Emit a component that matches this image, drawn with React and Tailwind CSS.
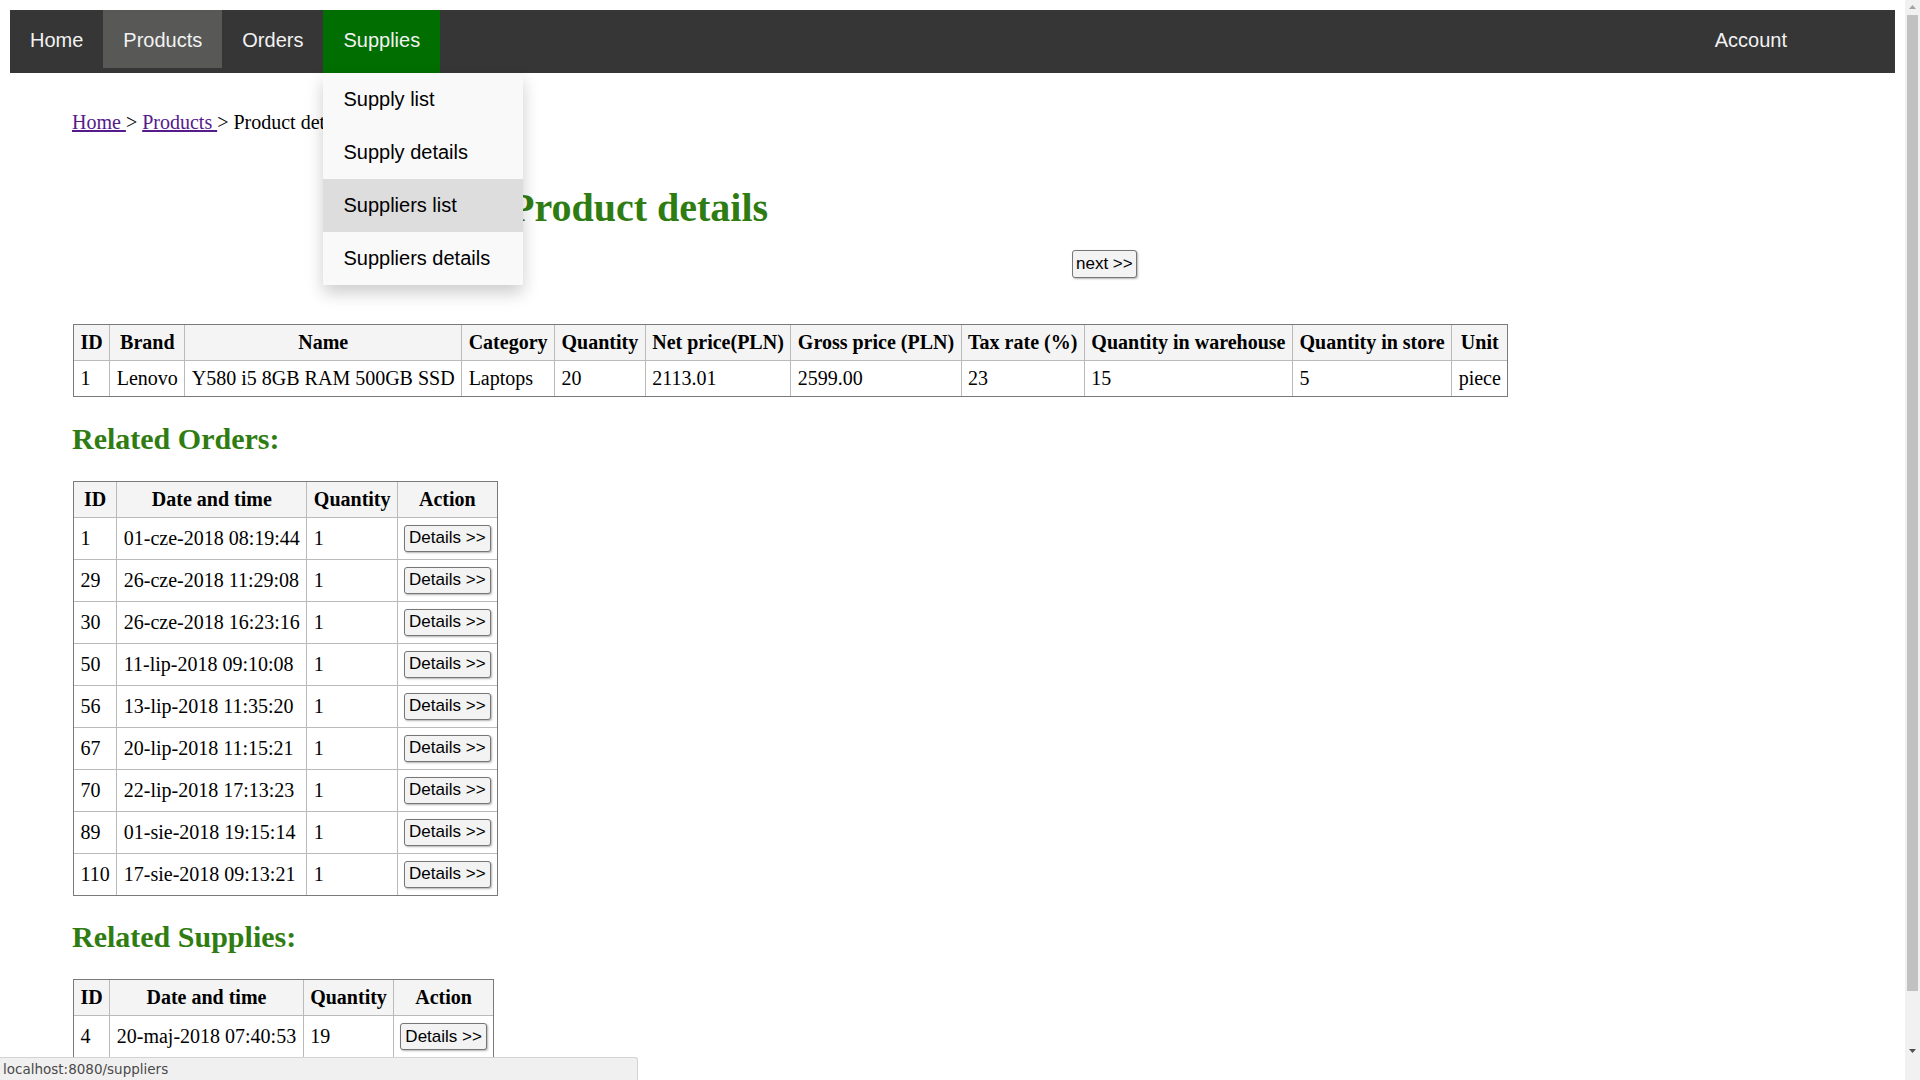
import React from 'react';

const sans = "font-['Liberation_Sans',Arial,sans-serif]";

const product = {
  cols: ['ID', 'Brand', 'Name', 'Category', 'Quantity', 'Net price(PLN)', 'Gross price (PLN)', 'Tax rate (%)', 'Quantity in warehouse', 'Quantity in store', 'Unit'],
  rows: [['1', 'Lenovo', 'Y580 i5 8GB RAM 500GB SSD', 'Laptops', '20', '2113.01', '2599.00', '23', '15', '5', 'piece']],
};

const orders = [
  ['1', '01-cze-2018 08:19:44', '1'],
  ['29', '26-cze-2018 11:29:08', '1'],
  ['30', '26-cze-2018 16:23:16', '1'],
  ['50', '11-lip-2018 09:10:08', '1'],
  ['56', '13-lip-2018 11:35:20', '1'],
  ['67', '20-lip-2018 11:15:21', '1'],
  ['70', '22-lip-2018 17:13:23', '1'],
  ['89', '01-sie-2018 19:15:14', '1'],
  ['110', '17-sie-2018 09:13:21', '1'],
];

const supplies = [
  ['4', '20-maj-2018 07:40:53', '19'],
  ['7', '02-cze-2018 10:12:31', '5'],
];

const Btn = ({ children, className = '' }) => (
  <button className={`${sans} h-[27px] text-[17px] leading-[normal] text-black bg-[#f3f3f3] border border-[#767676] rounded-[3px] shadow-[1px_1px_2px_rgba(0,0,0,0.3)] ${className}`}>
    {children}
  </button>
);

const Table = ({ cols, rows, action }) => (
  <table className="ml-px border border-[#7a7a7a] border-separate border-spacing-0 text-[20px]">
    <thead>
      <tr className="bg-[#f4f4f4]">
        {cols.map((c, i) => (
          <th key={c} className={`px-[6.5px] py-[6px] font-bold text-center whitespace-nowrap border-[#bababa] ${i > 0 ? 'border-l' : ''}`}>{c}</th>
        ))}
      </tr>
    </thead>
    <tbody>
      {rows.map((r, ri) => (
        <tr key={ri}>
          {r.map((v, i) => (
            <td key={i} className={`px-[6.5px] py-[6px] text-left whitespace-nowrap border-t border-[#bababa] ${action ? 'h-[42px]' : ''} ${i > 0 ? 'border-l' : ''}`}>{v}</td>
          ))}
          {action && (
            <td className="px-[6px] h-[42px] border-t border-l border-[#bababa]">
              <Btn className="px-[4px]">Details &gt;&gt;</Btn>
            </td>
          )}
        </tr>
      ))}
    </tbody>
  </table>
);

const NavItem = ({ children, className = '' }) => (
  <a className={`block px-5 pt-[19px] text-[20px] leading-[23px] text-[#f2f2f2] ${className}`}>{children}</a>
);

export default function App() {
  return (
    <div className="w-[1920px] h-[1080px] overflow-hidden flex bg-white text-black leading-[normal] font-['Liberation_Serif','Times_New_Roman',serif]">
      {/* Page */}
      <div className="relative w-[1905px] h-full px-[10px] pt-[10px]">
        {/* Top nav */}
        <nav className={`${sans} flex items-start h-[63px] bg-[#363636]`}>
          <NavItem className="pb-[21px]">Home</NavItem>
          <NavItem className="pb-[16px] bg-[#585957]">Products</NavItem>
          <NavItem className="pb-[21px]">Orders</NavItem>
          <div className="relative">
            <NavItem className="pb-[21px] bg-[#006e00]">Supplies</NavItem>
            {/* Dropdown */}
            <div className="absolute left-0 top-full z-10 w-[200px] bg-[#f9f9f9] shadow-[0_8px_16px_0_rgba(0,0,0,0.2)] text-[20px] leading-[23px] text-black">
              <a className="block px-5 py-[15px]">Supply list</a>
              <a className="block px-5 py-[15px]">Supply details</a>
              <a className="block px-5 py-[15px] bg-[#dddddd]">Suppliers list</a>
              <a className="block px-5 py-[15px]">Suppliers details</a>
            </div>
          </div>
          <div className="flex-1" />
          <NavItem className="pb-[21px] mr-[88px]">Account</NavItem>
        </nav>

        {/* Content */}
        <div className="pl-[62px]">
          <p className="mt-[38px] text-[20px] leading-[23px]">
            <a className="text-[#551a8b] underline">Home </a>&gt; <a className="text-[#551a8b] underline">Products </a>&gt; Product details
          </p>

          <h1 className="mt-[51px] ml-[438px] text-[40px] leading-[46px] font-bold text-[#2f7d12]">Product details</h1>

          <div className="mt-[19px] flex">
            <Btn className="ml-[1000px] h-[28px] px-[3px]">next &gt;&gt;</Btn>
          </div>

          <div className="mt-[46px]">
            <Table cols={product.cols} rows={product.rows} />
          </div>

          <h2 className="mt-[25px] text-[30px] leading-[34.5px] font-bold text-[#2f7d12]">Related Orders:</h2>
          <div className="mt-[24px]">
            <Table cols={['ID', 'Date and time', 'Quantity', 'Action']} rows={orders} action />
          </div>

          <h2 className="mt-[24px] text-[30px] leading-[34.5px] font-bold text-[#2f7d12]">Related Supplies:</h2>
          <div className="mt-[25px]">
            <Table cols={['ID', 'Date and time', 'Quantity', 'Action']} rows={supplies} action />
          </div>
        </div>

        {/* Browser status bar */}
        <div className="absolute left-0 bottom-0 w-[638px] h-[23px] flex items-center pl-[3px] bg-[#f0f0f0] border-t border-r border-[#d3d3d3] rounded-tr-[3px] font-['DejaVu_Sans',sans-serif] text-[13.5px] text-[#4a4a4a]">
          localhost:8080/suppliers
        </div>
      </div>

      {/* Scrollbar */}
      <div className="w-[15px] h-full bg-[#f1f1f1] flex flex-col items-center">
        <svg width="15" height="15" viewBox="0 0 15 15" className="shrink-0">
          <path d="M4 9 L7.5 5 L11 9 Z" fill="#a3a3a3" />
        </svg>
        <div className="w-[11px] h-[976px] bg-[#c1c1c1]" />
        <div className="flex-1" />
        <svg width="15" height="15" viewBox="0 0 15 15" className="shrink-0 mb-[22px]">
          <path d="M4 6 L7.5 10 L11 6 Z" fill="#505050" />
        </svg>
      </div>
    </div>
  );
}
